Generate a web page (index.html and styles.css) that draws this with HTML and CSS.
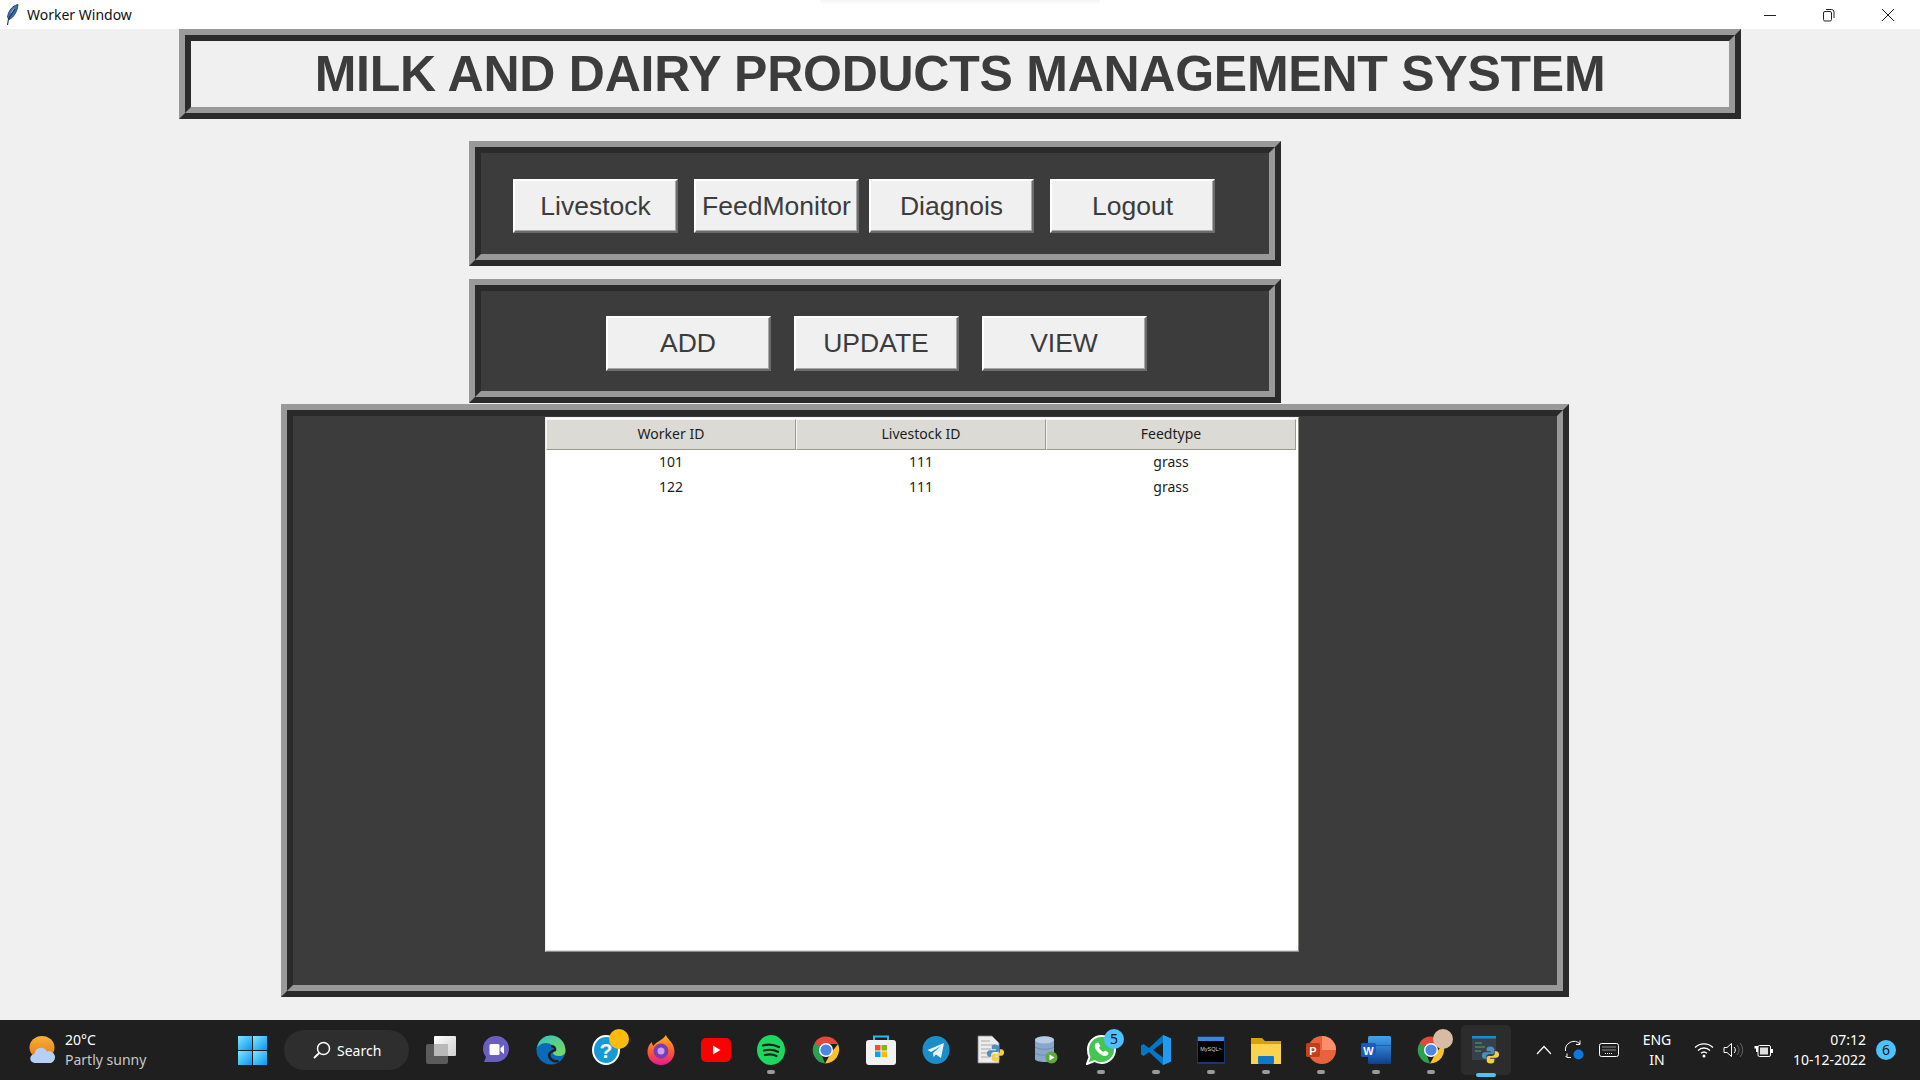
FILE: index.html
```html
<!DOCTYPE html>
<html lang="en">
<head>
  <meta charset="UTF-8">
  <title>Worker Window</title>
  <link rel="stylesheet" href="styles.css">
</head>
<body>
  <svg class="defs" aria-hidden="true">
    <defs>
      <linearGradient id="gStart" x1="0" y1="0" x2="1" y2="1"><stop offset="0" stop-color="#7ee8fb"/><stop offset="1" stop-color="#0a93f0"/></linearGradient>
      <linearGradient id="gSun" x1="0" y1="0" x2="0" y2="1"><stop offset="0" stop-color="#f9b233"/><stop offset="1" stop-color="#e8761a"/></linearGradient>
      <linearGradient id="gFront" x1="0" y1="0" x2="1" y2="1"><stop offset="0" stop-color="#ffffff"/><stop offset="1" stop-color="#cfcfcf"/></linearGradient>
      <linearGradient id="gEdge" x1="0" y1="0" x2="1" y2="1"><stop offset="0" stop-color="#2fc4c0"/><stop offset="1" stop-color="#7fdc55"/></linearGradient>
      <linearGradient id="gFox" x1="0" y1="0" x2="0" y2="1"><stop offset="0" stop-color="#ffb51f"/><stop offset=".55" stop-color="#ff5a2d"/><stop offset="1" stop-color="#e3199a"/></linearGradient>
      <linearGradient id="gWord" x1="0" y1="0" x2="0" y2="1"><stop offset="0" stop-color="#41a5ee"/><stop offset="1" stop-color="#103f91"/></linearGradient>
      <symbol id="chrome" viewBox="0 0 30 30">
        <path d="M15 15 4.600 21A12 13.500 0 0 1 4.600 7.500Z" fill="#2e9e4f"/>
        <path d="M15 1.500A13.500 13.500 0 0 1 27 9H15L6.600 11 3.800 7.400A13.500 13.500 0 0 1 15 1.500Z" fill="#e2493a"/>
        <path d="M27 9A14 14 0 0 1 14 28.500L20 18Z" fill="#fbc02d"/>
        <path d="M4 7.500 10 18 14 28.500A13.500 13.500 0 0 1 4 7.500Z" fill="#2e9e4f"/>
        <circle cx="15" cy="15" r="7" fill="#fff"/>
        <circle cx="15" cy="15" r="5.600" fill="#4a86e8"/>
      </symbol>
      <symbol id="python" viewBox="0 0 20 20">
        <path d="M10 1C6.500 1 6 2.500 6 4v2h4.500v1H4C2 7 1 8.500 1 10.500S2 14 4 14h1.500v-2.500C5.500 10 7 9 8.500 9h3.500C13 9 14 8 14 7V4c0-1.500-1.500-3-4-3Z" fill="#4a8ec4"/>
        <path d="M10 19c3.500 0 4-1.500 4-3v-2H9.500v-1H16c2 0 3-1.500 3-3.500S18 6 16 6h-1.500v2.500C14.500 10 13 11 11.500 11H8C7 11 6 12 6 13v3c0 1.500 1.500 3 4 3Z" fill="#f5cd4c"/>
      </symbol>
    </defs>
  </svg>

  <header class="titlebar">
    <svg class="feather" viewBox="0 0 14 22" width="14" height="22"><path d="M13 .5C8 1.500 3.500 6 2.500 13l1.500 2.500C9 13.500 12.500 7 13 .5Z" fill="#3f74b8" stroke="#1b2c44" stroke-width=".8"/><path d="M9 4.500 6 9" stroke="#a9c6ea" fill="none"/><path d="M10 5 3.500 15 2.500 21" fill="none" stroke="#1b2c44" stroke-width="1.100"/></svg>
    <span class="window-title">Worker Window</span>
    <div class="window-controls">
      <svg viewBox="0 0 14 14" width="14" height="14"><path d="M1 7.500h12" stroke="#222" fill="none"/></svg>
      <svg viewBox="0 0 14 14" width="14" height="14"><rect x="1.500" y="3.500" width="8" height="9.500" rx="1.500" stroke="#222" fill="none"/><path d="M4 1.500h5.500A2.500 2.500 0 0 1 12 4v6" stroke="#222" fill="none"/></svg>
      <svg viewBox="0 0 14 14" width="14" height="14"><path d="M1 1l12 12M13 1 1 13" stroke="#222" fill="none"/></svg>
    </div>
  </header>

  <main class="content">
    <div class="frame title-frame">
      <div class="frame-inner title-inner">
        <h1>MILK AND DAIRY PRODUCTS MANAGEMENT SYSTEM</h1>
      </div>
    </div>

    <div class="frame nav-frame">
      <div class="frame-inner nav-inner">
        <button class="btn">Livestock</button>
        <button class="btn btn-wide-gap">FeedMonitor</button>
        <button class="btn btn-narrow-gap">Diagnois</button>
        <button class="btn btn-wide-gap">Logout</button>
      </div>
    </div>

    <div class="frame action-frame">
      <div class="frame-inner action-inner">
        <button class="btn">ADD</button>
        <button class="btn">UPDATE</button>
        <button class="btn">VIEW</button>
      </div>
    </div>

    <div class="frame table-frame">
      <div class="frame-inner table-inner">
        <div class="tree">
          <table>
            <thead>
              <tr><th>Worker ID</th><th>Livestock ID</th><th>Feedtype</th></tr>
            </thead>
            <tbody>
              <tr><td>101</td><td>111</td><td>grass</td></tr>
              <tr><td>122</td><td>111</td><td>grass</td></tr>
            </tbody>
          </table>
        </div>
      </div>
    </div>
  </main>

  <footer class="taskbar">
    <div class="weather">
      <svg viewBox="0 0 27 28" width="27" height="28">
        <ellipse cx="13" cy="11.500" rx="12.500" ry="11.500" fill="url(#gSun)"/>
        <path d="M6 27a4.500 4.500 0 0 1-.5-9 6.500 6.500 0 0 1 12.300-2.500A5.500 5.500 0 0 1 22 27Z" fill="#b4d0f4"/>
      </svg>
      <div class="weather-text">
        <span class="temp">20°C</span>
        <span class="forecast">Partly sunny</span>
      </div>
    </div>

    <div class="task-item">
      <svg viewBox="0 0 29 29" width="29" height="29"><g fill="url(#gStart)"><rect width="14" height="14"/><rect x="15" width="14" height="14"/><rect y="15" width="14" height="14"/><rect x="15" y="15" width="14" height="14"/></g></svg>
    </div>

    <div class="search-pill">
      <svg viewBox="0 0 18 18" width="18" height="18"><circle cx="10.500" cy="7.500" r="6" fill="none" stroke="#fff" stroke-width="1.500"/><path d="M6.200 12 1 17" stroke="#fff" stroke-width="1.800" fill="none"/></svg>
      <span>Search</span>
    </div>

    <div class="task-apps">
      <div class="task-item">
        <svg viewBox="0 0 30 28" width="30" height="28"><rect y="8" width="22" height="20" rx="2" fill="#5b5b5b"/><rect x="8" width="22" height="20" rx="1" fill="url(#gFront)"/><rect x="8" y="8" width="14" height="12" fill="#b9b9b9"/></svg>
      </div>
      <div class="task-item">
        <svg viewBox="0 0 28 30" width="28" height="30"><path d="M14 1c8 0 13 6 13 13s-6 13-13 13H2l2-5C2 19 1 17 1 14 1 7 6 1 14 1Z" fill="#6a5fc1"/><rect x="7.500" y="9" width="10" height="11" rx="1.500" fill="#fff"/><path d="M18.500 13l3.500-3v9l-3.500-3Z" fill="#fff"/></svg>
      </div>
      <div class="task-item">
        <svg viewBox="0 0 30 30" width="30" height="30"><circle cx="15" cy="15" r="14.500" fill="#0b6ab8"/><path d="M1 14C2 5 8 .5 15 .5 23 .5 29.500 7 29.500 16c0 3-3 5-6.500 5-4 0-6-1.500-6-3 0-1 1-1.500 1-3 0-4-3.500-7-8-7-5 0-8 3-9.500 6Z" fill="url(#gEdge)"/><path d="M15 11c3 0 4.500 2 4 4-3 1-7 3-5.500 7 1 3 5 5 9 4" fill="none" stroke="#1f1f1f" stroke-width="2.500"/></svg>
      </div>
      <div class="task-item">
        <svg viewBox="0 0 28 30" width="28" height="30"><ellipse cx="14" cy="15" rx="13" ry="14" fill="#159ad6" stroke="#fff" stroke-width="2"/><text x="14" y="23" class="help-mark">?</text></svg>
        <span class="dot-yellow"></span>
      </div>
      <div class="task-item">
        <svg viewBox="0 0 28 32" width="28" height="32"><path d="M19 1c1 4 8 7 8.500 16 .3 8-6 14-13.500 14S.5 25.500.5 18C.5 13 3 9.500 5 8c0 2 .5 3 1.500 4C8 8 15 7 19 1Z" fill="url(#gFox)"/><circle cx="14" cy="17" r="7.500" fill="#7c3bb5"/><circle cx="14" cy="17" r="3.500" fill="#c9a0f0"/></svg>
      </div>
      <div class="task-item">
        <svg viewBox="0 0 30 24" width="30" height="24"><rect width="30" height="24" rx="5" fill="#f00"/><path d="M12 7.500 19.500 12 12 16.500Z" fill="#fff"/></svg>
      </div>
      <div class="task-item">
        <svg viewBox="0 0 28 30" width="28" height="30"><ellipse cx="14" cy="15" rx="14" ry="15" fill="#1ed760"/><path d="M6 10.500c5-1.500 11-1 16 1.500M7 15.500c4.500-1.200 10-.8 14 1.300M8 20c4-1 8-.7 11.500 1" fill="none" stroke="#1f1f1f" stroke-width="2.200" stroke-linecap="round"/></svg>
        <span class="run-dot"></span>
      </div>
      <div class="task-item">
        <svg width="30" height="30"><use href="#chrome"/></svg>
      </div>
      <div class="task-item">
        <svg viewBox="0 0 30 30" width="30" height="30"><path d="M8 7V1.500h14V7" fill="none" stroke="#33b5f0" stroke-width="2"/><rect y="5" width="30" height="25" rx="3" fill="#f2f2f2"/><rect x="9" y="10" width="5.500" height="5.500" fill="#f25022"/><rect x="15.500" y="10" width="5.500" height="5.500" fill="#7fba00"/><rect x="9" y="16.500" width="5.500" height="5.500" fill="#00a4ef"/><rect x="15.500" y="16.500" width="5.500" height="5.500" fill="#ffb900"/></svg>
      </div>
      <div class="task-item">
        <svg viewBox="0 0 28 28" width="28" height="28"><ellipse cx="14" cy="14" rx="13.500" ry="14" fill="#1b8ec9"/><path d="M5.500 14 22 7l-3 15-5-3.500-2.500 2.500-.5-4 8-7-10 6Z" fill="#e8f4fb"/></svg>
      </div>
      <div class="task-item">
        <svg viewBox="0 0 28 30" width="28" height="30"><path d="M1 1h14l7 7v20H1Z" fill="#ececec" stroke="#888" stroke-width=".8"/><path d="M4 6h9M4 10h14M4 14h10M4 18h9M4 22h9" stroke="#aaa" fill="none"/><svg x="9" y="8" width="19" height="20"><use href="#python"/></svg></svg>
      </div>
      <div class="task-item">
        <svg viewBox="0 0 24 30" width="24" height="30"><path d="M1 5c0-5 19-5 19 0v19c0 4-19 4-19 0Z" fill="#8aa6cc"/><ellipse cx="10.500" cy="5" rx="9.500" ry="3.500" fill="#b7cbe4"/><path d="M1 12c4 3 15 3 19 0M1 18c4 3 15 3 19 0" fill="none" stroke="#6f8cb5"/><circle cx="17.500" cy="22.500" r="6" fill="#5fa83a"/><path d="M15.500 19.500 20.500 22.500 15.500 25.500Z" fill="#fff"/></svg>
      </div>
      <div class="task-item">
        <svg viewBox="0 0 30 30" width="30" height="30"><path d="M15.500 1C23 1 29 7 29 14.500S23 28 15.500 28c-2.500 0-5-.7-7-2L1 29l2.500-7C2.300 19.800 2 17 2 14.500 2 7 8 1 15.500 1Z" fill="#43c553" stroke="#fff" stroke-width="2"/><path d="M10 8c-2 2-1.500 5 1 8s6 5.500 8.500 5c2-.3 3.200-2 3-3.500l-3.500-2-1.500 1.500c-1.500-.5-4-3-4.500-4.500l1.500-1.500-2-3.500Z" fill="#fff"/></svg>
        <span class="badge-count">5</span>
        <span class="run-dot"></span>
      </div>
      <div class="task-item">
        <svg viewBox="0 0 30 30" width="30" height="30"><path d="M22 0 30 3.500v23L22 30 8 17 2.500 21 0 19.500V10.500L2.500 9 8 13Z" fill="#0078c8"/><path d="M22 0 30 3.500v23L22 30Z" fill="#1f9cf0"/><path d="M22 7.500V22.500L12 15Z" fill="#1f1f1f"/></svg>
        <span class="run-dot"></span>
      </div>
      <div class="task-item">
        <svg viewBox="0 0 28 28" width="28" height="28"><rect width="28" height="28" rx="1" fill="#17386e"/><rect x="1" y="1" width="26" height="4" fill="#3f87d6"/><rect x="1" y="5" width="26" height="21" fill="#000"/><text x="14" y="15" class="mysql-text">MySQL&gt;</text></svg>
        <span class="run-dot"></span>
      </div>
      <div class="task-item">
        <svg viewBox="0 0 30 28" width="30" height="28"><path d="M0 2h11l3 3h16v23H0Z" fill="#d89f10"/><rect y="8" width="30" height="20" fill="#fcd34d"/><rect x="7" y="20" width="16" height="8" rx="1" fill="#0f78c8"/></svg>
        <span class="run-dot"></span>
      </div>
      <div class="task-item">
        <svg viewBox="0 0 30 28" width="30" height="28"><ellipse cx="16" cy="14" rx="14" ry="14" fill="#e8623d"/><path d="M16 0a14 14 0 0 1 14 14H16Z" fill="#ff8f6b"/><rect y="7" width="14" height="14" rx="1.500" fill="#c43e1c"/><text x="7" y="18.500" class="office-letter">P</text></svg>
        <span class="run-dot"></span>
      </div>
      <div class="task-item">
        <svg viewBox="0 0 30 28" width="30" height="28"><rect x="7" width="23" height="28" rx="1.500" fill="url(#gWord)"/><path d="M7 9.500h23M7 19h23" stroke="#1f5fb5" fill="none"/><rect y="7" width="15" height="14" rx="1.500" fill="#185abd"/><text x="7.500" y="18.500" class="office-letter">W</text></svg>
        <span class="run-dot"></span>
      </div>
      <div class="task-item">
        <svg width="30" height="30"><use href="#chrome"/></svg>
        <span class="avatar"></span>
        <span class="run-dot"></span>
      </div>
      <div class="task-item task-active">
        <svg viewBox="0 0 28 30" width="28" height="30"><rect y="1" width="24" height="24" fill="#38414b"/><rect y="1" width="24" height="2.500" fill="#1c8ccf"/><path d="M3 8h7M3 12h10M3 16h6" stroke="#4caf50" fill="none"/><svg x="9" y="10" width="19" height="20"><use href="#python"/></svg></svg>
        <span class="run-bar"></span>
      </div>
    </div>

    <div class="tray">
      <svg class="tray-caret" viewBox="0 0 16 10" width="16" height="10"><path d="M1 9 8 1.500 15 9" fill="none" stroke="#fff" stroke-width="1.200"/></svg>
      <svg class="tray-sync" viewBox="0 0 20 20" width="20" height="20"><path d="M1.500 11A8.500 8.500 0 0 1 16 4M16 .5V4.500H12M3 13.500V17.500H7M3 17.500 1.500 16" fill="none" stroke="#fff"/><circle cx="14.500" cy="14.500" r="5" fill="#0a78e0"/></svg>
      <svg class="tray-keys" viewBox="0 0 20 14" width="20" height="14"><rect x=".5" y=".5" width="19" height="13" rx="2" fill="none" stroke="#fff"/><path d="M3.500 4h13M3.500 7h13M6 10.500h8" stroke="#fff" stroke-dasharray="1 1" fill="none"/></svg>
      <div class="tray-lang"><span>ENG</span><span>IN</span></div>
      <svg class="tray-wifi" viewBox="0 0 20 16" width="20" height="16"><path d="M1 5.500a13 13 0 0 1 18 0M4 8.500a8.500 8.500 0 0 1 12 0M7 11.300a4.500 4.500 0 0 1 6 0" fill="none" stroke="#fff" stroke-width="1.300"/><circle cx="10" cy="14" r="1.500" fill="#fff"/></svg>
      <svg class="tray-sound" viewBox="0 0 20 16" width="20" height="16"><path d="M1 5.500h3L8.500 1.500v13L4 10.500H1Z" fill="none" stroke="#fff"/><path d="M11 5a4 4 0 0 1 0 6" fill="none" stroke="#fff"/><path d="M14 3a7 7 0 0 1 0 10M17 1a10.500 10.500 0 0 1 0 14" fill="none" stroke="#666"/></svg>
      <svg class="tray-power" viewBox="0 0 20 16" width="20" height="16"><path d="M3 0v4M6 0v4M1.500 4h6v2.500H6V10H3V6.500H1.500Z" fill="#fff"/><rect x="5" y="3.500" width="12.500" height="11" rx="1.500" fill="#1f1f1f" stroke="#fff"/><rect x="7" y="5.500" width="8" height="7" fill="#ddd"/><rect x="18" y="7" width="2" height="4" fill="#fff"/></svg>
      <div class="clock"><span>07:12</span><span>10-12-2022</span></div>
      <span class="notify">6</span>
    </div>
  </footer>
</body>
</html>
```

FILE: styles.css
```css
* { box-sizing: border-box; margin: 0; padding: 0; }

body {
  width: 1920px;
  height: 1080px;
  display: flex;
  flex-direction: column;
  overflow: hidden;
  background: #f0f0f0;
  color: #3c3c3c;
  font-family: "Liberation Sans", Arial, sans-serif;
}

.defs { display: block; width: 0; height: 0; }

/* title bar */
.titlebar {
  position: relative;
  display: flex;
  align-items: center;
  height: 29px;
  flex: none;
  padding-left: 5px;
  background: #fff;
}
.titlebar::before {
  content: "";
  position: absolute;
  left: 820px;
  top: 0;
  width: 280px;
  height: 5px;
  border-radius: 0 0 12px 12px;
  background: linear-gradient(#f3f3f3, #fff);
}
.feather { flex: none; }
.window-title {
  margin-left: 8px;
  font-family: "Noto Sans", sans-serif;
  font-size: 14px;
  color: #111;
}
.window-controls {
  display: flex;
  align-items: center;
  gap: 45px;
  margin-left: auto;
  padding-right: 25px;
}

/* 3D frames */
.content { flex: 1; }
.frame {
  border: 6px solid;
  border-color: #999 #2a2a2a #2a2a2a #999;
}
.frame-inner {
  height: 100%;
  border: 6px solid;
  border-color: #2a2a2a #999 #999 #2a2a2a;
  background: #3c3c3c;
}
.title-frame { width: 1562px; height: 90px; margin-left: 179px; }
.title-inner {
  display: flex;
  align-items: center;
  justify-content: center;
  background: #f0f0f0;
}
h1 { font-size: 50px; font-weight: 700; letter-spacing: -0.25px; color: #3c3c3c; }

.nav-frame { width: 812px; height: 125px; margin: 22px 0 0 469px; }
.nav-inner { display: flex; align-items: flex-start; padding: 26px 0 0 32px; }
.action-frame { width: 812px; height: 124px; margin: 13px 0 0 469px; }
.action-inner { display: flex; align-items: flex-start; justify-content: center; gap: 23px; padding: 25px 0 0 2px; }

.btn {
  width: 165px;
  height: 54px;
  flex: none;
  border: 2px solid;
  border-color: #fff #6b6b6b #6b6b6b #fff;
  box-shadow: inset -1px -1px 0 #a8a8a8;
  background: #f0f0f0;
  font-family: "Liberation Sans", Arial, sans-serif;
  font-size: 26.5px;
  color: #3c3c3c;
}
.action-inner .btn { height: 55px; }
.btn-wide-gap { margin-left: 16px; }
.btn-narrow-gap { margin-left: 10px; }

/* table */
.table-frame { width: 1288px; height: 593px; margin: 1px 0 0 281px; }
.table-inner { padding: 1px 0 0 252px; }
.tree {
  width: 754px;
  height: 535px;
  padding-top: 1px;
  border: 1px solid;
  border-color: #eeeeee #8f8c84 #8f8c84 #eeeeee;
  background: #fff;
  box-shadow: inset 0 -1px 0 #dcdad5;
}
table {
  width: 750px;
  table-layout: fixed;
  border-collapse: separate;
  border-spacing: 0;
  font-family: "Noto Sans", sans-serif;
  font-size: 14px;
  color: #1c1c1c;
}
th {
  height: 31px;
  padding-bottom: 2px;
  border: 1px solid;
  border-color: #f5f4f2 #9e9a91 #9e9a91 #f5f4f2;
  background: #dcdad5;
  font-weight: 400;
}
td { height: 25px; padding-bottom: 2px; text-align: center; }

/* taskbar */
.taskbar {
  display: flex;
  align-items: center;
  height: 60px;
  flex: none;
  background: #1f1f1f;
  color: #fff;
  font-family: "Noto Sans", sans-serif;
  font-size: 14px;
}
.weather {
  display: flex;
  align-items: center;
  gap: 9px;
  width: 225px;
  flex: none;
  padding-left: 29px;
}
.weather-text { display: flex; flex-direction: column; line-height: 20px; }
.forecast { color: #c8c8c8; }
.task-item {
  position: relative;
  display: flex;
  align-items: center;
  justify-content: center;
  width: 55px;
  height: 60px;
  flex: none;
}
.search-pill {
  display: flex;
  align-items: center;
  gap: 6px;
  width: 125px;
  height: 40px;
  flex: none;
  margin-left: 4px;
  padding-left: 29px;
  border-radius: 20px;
  background: #2e2e2e;
}
.task-apps { display: flex; margin-left: 4px; }
.run-dot {
  position: absolute;
  left: 24px;
  bottom: 6px;
  width: 8px;
  height: 4px;
  border-radius: 2px;
  background: #9a9a9a;
}
.run-bar {
  position: absolute;
  left: 18px;
  bottom: 3px;
  width: 20px;
  height: 4px;
  border-radius: 2px;
  background: #4cc2ff;
}
.task-active::before {
  content: "";
  position: absolute;
  left: 3px;
  top: 5px;
  width: 50px;
  height: 50px;
  border-radius: 5px;
  background: #2c2c2c;
}
.task-active svg { position: relative; }
.dot-yellow {
  position: absolute;
  left: 31px;
  top: 9px;
  width: 20px;
  height: 20px;
  border-radius: 50%;
  background: #fdbc0d;
}
.badge-count {
  position: absolute;
  left: 31px;
  top: 9px;
  width: 20px;
  height: 20px;
  border-radius: 50%;
  background: #4cc2ff;
  color: #111;
  font-size: 14px;
  line-height: 20px;
  text-align: center;
}
.avatar {
  position: absolute;
  left: 30px;
  top: 9px;
  width: 20px;
  height: 20px;
  border-radius: 50%;
  background: #d8bba4;
}
.help-mark { font: 700 21px "Liberation Sans", sans-serif; fill: #fff; text-anchor: middle; }
.mysql-text { font: 5.500px "Liberation Sans", sans-serif; fill: #ddd; text-anchor: middle; }
.office-letter { font: 700 11px "Liberation Sans", sans-serif; fill: #fff; text-anchor: middle; }

/* tray */
.tray { display: flex; align-items: center; flex: 1; padding-left: 23px; }
.tray-sync { margin-left: 12px; }
.tray-keys { margin-left: 15px; }
.tray-lang {
  display: flex;
  flex-direction: column;
  align-items: center;
  width: 40px;
  margin-left: 18px;
  line-height: 20px;
}
.tray-wifi { margin-left: 17px; }
.tray-sound { margin-left: 9px; }
.tray-power { margin-left: 10px; }
.clock {
  display: flex;
  flex-direction: column;
  align-items: flex-end;
  width: 93px;
  line-height: 20px;
}
.notify {
  width: 20px;
  height: 20px;
  margin-left: 10px;
  border-radius: 50%;
  background: #4cc2ff;
  color: #111;
  font-size: 14px;
  line-height: 20px;
  text-align: center;
}
```
